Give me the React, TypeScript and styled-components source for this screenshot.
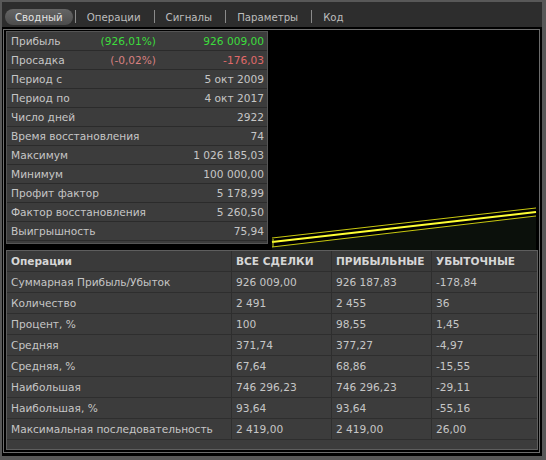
import { createGlobalStyle } from "styled-components"
import styled from "styled-components"

const GlobalStyle = createGlobalStyle`
  html, body {
    margin: 0;
    padding: 0;
    background: #585858;
  }
  * {
    box-sizing: border-box;
  }
`

const Window = styled.div`
  width: 546px;
  height: 460px;
  background: #585858;
  padding: 2px 4px 4px 2px;
  font-family: "DejaVu Sans", Verdana, sans-serif;
  font-size: 10.6px;
  color: #c6c6c6;
`

const Inner = styled.div`
  height: 100%;
  background: #000;
  display: flex;
  flex-direction: column;
`

const TabBar = styled.div`
  height: 25px;
  background: #2d2d2d;
  display: flex;
  align-items: flex-end;
  padding: 0 0 2px 3px;
  font-size: 10.2px;
`

const Tab = styled.div<{ active?: boolean }>`
  height: 16px;
  display: flex;
  align-items: center;
  padding: 0 ${(p) => (p.active ? "10px" : "11px")};
  border-radius: 8px;
  color: ${(p) => (p.active ? "#e4e4e4" : "#bdbdbd")};
  background: ${(p) =>
    p.active ? "linear-gradient(#656565, #4c4c4c)" : "transparent"};
  white-space: nowrap;
`

const TabSep = styled.div`
  width: 1px;
  height: 13px;
  margin: 0 0 2px 2px;
  background: #8a8a8a;
  align-self: flex-end;
`

const Body = styled.div`
  flex: 1;
  padding: 2px 2px 3px 1px;
  display: flex;
`

const Frame = styled.div`
  flex: 1;
  border: 1px solid #6c6c6c;
  padding: 1px 1px 2px 2px;
  display: flex;
  flex-direction: column;
`

const TopRow = styled.div`
  display: flex;
  height: 219px;
`

const Stats = styled.div`
  width: 262px;
  height: 213px;
  background: #3c3c3c;
  border: 1px solid #555;
  display: flex;
  flex-direction: column;
`

const StatRow = styled.div`
  height: 19px;
  display: grid;
  grid-template-columns: minmax(0, 1fr) 76px 108px;
  align-items: center;
  padding: 0 3px 0 4px;
  border-bottom: 1px solid #2b2b2b;
`

const Label = styled.span`
  white-space: nowrap;
`

const Pct = styled.span<{ tone?: "up" | "down" }>`
  text-align: right;
  color: ${(p) => (p.tone === "up" ? "#3ddc3d" : p.tone === "down" ? "#d88080" : "#c6c6c6")};
`

const Value = styled.span<{ tone?: "up" | "down" }>`
  text-align: right;
  white-space: nowrap;
  color: ${(p) => (p.tone === "up" ? "#3ddc3d" : p.tone === "down" ? "#e06a6a" : "#c6c6c6")};
`

const Chart = styled.div`
  flex: 1;
  background: #000;
`

const Table = styled.div`
  flex: 1;
  background: #3c3c3c;
  border: 1px solid #5e5e5e;
  display: flex;
  flex-direction: column;
`

const TRow = styled.div<{ head?: boolean }>`
  height: 21px;
  display: grid;
  grid-template-columns: 225px 100px 100px 1fr;
  border-bottom: 1px solid #2e2e2e;
  font-weight: ${(p) => (p.head ? "bold" : "normal")};
  color: ${(p) => (p.head ? "#d6d6d6" : "#c6c6c6")};
  background: ${(p) => (p.head ? "#3a3a3a" : "transparent")};
`

const Cell = styled.div`
  display: flex;
  align-items: center;
  padding-left: 4px;
  white-space: nowrap;
  border-right: 1px solid #2e2e2e;
  &:last-child {
    border-right: none;
  }
`

const tabs = ["Сводный", "Операции", "Сигналы", "Параметры", "Код"]

const stats: { label: string; pct?: string; value: string; tone?: "up" | "down" }[] = [
  { label: "Прибыль", pct: "(926,01%)", value: "926 009,00", tone: "up" },
  { label: "Просадка", pct: "(-0,02%)", value: "-176,03", tone: "down" },
  { label: "Период с", value: "5 окт 2009" },
  { label: "Период по", value: "4 окт 2017" },
  { label: "Число дней", value: "2922" },
  { label: "Время восстановления", value: "74" },
  { label: "Максимум", value: "1 026 185,03" },
  { label: "Минимум", value: "100 000,00" },
  { label: "Профит фактор", value: "5 178,99" },
  { label: "Фактор восстановления", value: "5 260,50" },
  { label: "Выигрышность", value: "75,94" },
]

const head = ["Операции", "ВСЕ СДЕЛКИ", "ПРИБЫЛЬНЫЕ", "УБЫТОЧНЫЕ"]

const rows = [
  ["Суммарная Прибыль/Убыток", "926 009,00", "926 187,83", "-178,84"],
  ["Количество", "2 491", "2 455", "36"],
  ["Процент, %", "100", "98,55", "1,45"],
  ["Средняя", "371,74", "377,27", "-4,97"],
  ["Средняя, %", "67,64", "68,86", "-15,55"],
  ["Наибольшая", "746 296,23", "746 296,23", "-29,11"],
  ["Наибольшая, %", "93,64", "93,64", "-55,16"],
  ["Максимальная последовательность", "2 419,00", "2 419,00", "26,00"],
]

const EquityChart = () => (
  <svg width="100%" height="219" viewBox="0 0 270 219" preserveAspectRatio="none">
    <polygon points="4,216 268,185 268,219 4,219" fill="#0b100b" />
    <line x1="4" y1="207" x2="268" y2="177" stroke="#c8c810" strokeWidth="1" />
    <line x1="4" y1="211" x2="268" y2="181" stroke="#ffff33" strokeWidth="2" />
    <line x1="4" y1="216" x2="268" y2="185" stroke="#c8c810" strokeWidth="1" />
    <line x1="5" y1="208" x2="5" y2="216" stroke="#d0e020" strokeWidth="1" />
  </svg>
)

export default function App() {
  return (
    <>
      <GlobalStyle />
      <Window>
        <Inner>
          <TabBar>
            {tabs.map((t, i) => (
              <>
                {i > 0 && <TabSep key={"s" + i} />}
                <Tab key={t} active={i === 0}>
                  {t}
                </Tab>
              </>
            ))}
          </TabBar>
          <Body>
            <Frame>
              <TopRow>
                <Stats>
                  {stats.map((s) => (
                    <StatRow key={s.label}>
                      <Label>{s.label}</Label>
                      <Pct tone={s.tone}>{s.pct}</Pct>
                      <Value tone={s.tone}>{s.value}</Value>
                    </StatRow>
                  ))}
                </Stats>
                <Chart>
                  <EquityChart />
                </Chart>
              </TopRow>
              <Table>
                <TRow head>
                  {head.map((h) => (
                    <Cell key={h}>{h}</Cell>
                  ))}
                </TRow>
                {rows.map((r) => (
                  <TRow key={r[0]}>
                    {r.map((c, i) => (
                      <Cell key={i}>{c}</Cell>
                    ))}
                  </TRow>
                ))}
              </Table>
            </Frame>
          </Body>
        </Inner>
      </Window>
    </>
  )
}
